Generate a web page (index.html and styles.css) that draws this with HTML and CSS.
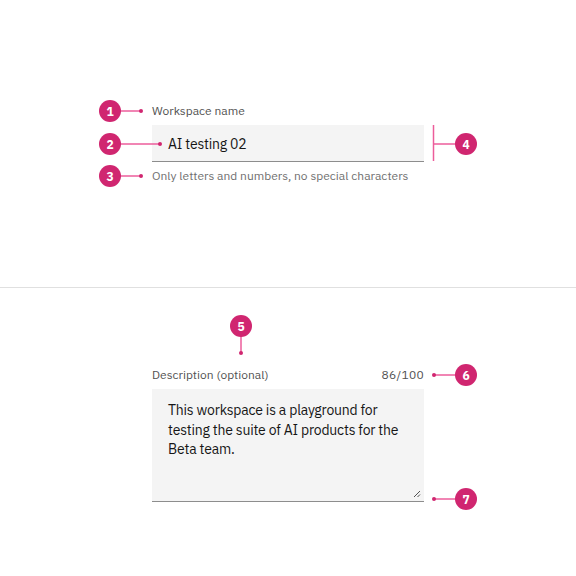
FILE: index.html
```html
<!DOCTYPE html>
<html lang="en">
<head>
<meta charset="utf-8">
<title>Text input anatomy</title>
<link rel="stylesheet" href="styles.css">
</head>
<body>
<main class="page">
  <section class="panel panel-top">
    <div class="field">
      <label class="label">Workspace name</label>
      <div class="input">AI testing 02</div>
      <p class="helper">Only letters and numbers, no special characters</p>

      <svg class="note note-1" width="44" height="22" viewBox="0 0 44 22">
        <line class="wire" x1="21" y1="11" x2="42" y2="11"/>
        <circle class="dot" cx="42" cy="11" r="2"/>
        <circle class="disc" cx="11" cy="11" r="11"/>
        <text class="num" x="11" y="15.5">1</text>
      </svg>
      <svg class="note note-2" width="63" height="22" viewBox="0 0 63 22">
        <line class="wire" x1="21" y1="11" x2="61" y2="11"/>
        <circle class="dot" cx="61" cy="11" r="2"/>
        <circle class="disc" cx="11" cy="11" r="11"/>
        <text class="num" x="11" y="15.5">2</text>
      </svg>
      <svg class="note note-3" width="44" height="22" viewBox="0 0 44 22">
        <line class="wire" x1="21" y1="11" x2="42" y2="11"/>
        <circle class="dot" cx="42" cy="11" r="2"/>
        <circle class="disc" cx="11" cy="11" r="11"/>
        <text class="num" x="11" y="15.5">3</text>
      </svg>
      <svg class="note note-4" width="46" height="38" viewBox="0 0 46 38">
        <line class="wire" x1="1.5" y1="1" x2="1.5" y2="37"/>
        <line class="wire" x1="1.5" y1="20" x2="25" y2="20"/>
        <circle class="disc" cx="34" cy="20" r="11"/>
        <text class="num" x="34" y="24.5">4</text>
      </svg>
    </div>
  </section>

  <section class="panel panel-bottom">
    <div class="field">
      <div class="label-row">
        <span class="label">Description (optional)</span>
        <span class="label counter">86/100</span>
      </div>
      <div class="textarea">
        <p class="textarea-text">This workspace is a playground for testing the suite of AI products for the Beta team.</p>
        <svg class="resize" width="8" height="8" viewBox="0 0 8 8">
          <line x1="1" y1="7" x2="7" y2="1"/>
          <line x1="4.5" y1="7" x2="7" y2="4.5"/>
        </svg>
      </div>

      <svg class="note note-5" width="22" height="41" viewBox="0 0 22 41">
        <line class="wire" x1="11" y1="20" x2="11" y2="38"/>
        <circle class="dot" cx="11" cy="38" r="2"/>
        <circle class="disc" cx="11" cy="11" r="11"/>
        <text class="num" x="11" y="15.5">5</text>
      </svg>
      <svg class="note note-6" width="46" height="22" viewBox="0 0 46 22">
        <line class="wire" x1="2" y1="11" x2="25" y2="11"/>
        <circle class="dot" cx="2" cy="11" r="2"/>
        <circle class="disc" cx="34" cy="11" r="11"/>
        <text class="num" x="34" y="15.5">6</text>
      </svg>
      <svg class="note note-7" width="46" height="22" viewBox="0 0 46 22">
        <line class="wire" x1="2" y1="11" x2="25" y2="11"/>
        <circle class="dot" cx="2" cy="11" r="2"/>
        <circle class="disc" cx="34" cy="11" r="11"/>
        <text class="num" x="34" y="15.5">7</text>
      </svg>
    </div>
  </section>
</main>
</body>
</html>
```

FILE: styles.css
```css
* { box-sizing: border-box; }

html, body {
  margin: 0;
  padding: 0;
  background: #ffffff;
}

body {
  font-family: "IBM Plex Sans", Inter, "Noto Sans", sans-serif;
  color: #161616;
}

.page {
  width: 576px;
  height: 576px;
  overflow: hidden;
}

.panel {
  padding-left: 152px;
}

.panel-top {
  height: 288px;
  padding-top: 103px;
  border-bottom: 1px solid #e0e0e0;
}

.panel-bottom {
  padding-top: 79px;
}

.field {
  position: relative;
  width: 272px;
}

.label {
  display: block;
  font-size: 12px;
  line-height: 16px;
  letter-spacing: 0;
  color: #525252;
  margin: 0 0 6px;
}

.label-row {
  display: flex;
  justify-content: space-between;
}

.counter {
  letter-spacing: 0.3px;
}

.input {
  height: 37px;
  background: #f4f4f4;
  border-bottom: 1px solid #8d8d8d;
  padding: 2px 16px 0;
  display: flex;
  align-items: center;
  font-size: 14px;
  letter-spacing: -0.2px;
  color: #161616;
}

.helper {
  margin: 6px 0 0;
  font-size: 12px;
  line-height: 16px;
  letter-spacing: 0;
  color: #6f6f6f;
}

.textarea {
  position: relative;
  height: 113px;
  background: #f4f4f4;
  border-bottom: 1px solid #8d8d8d;
  padding: 12px 16px 11px;
}

.textarea-text {
  margin: 0;
  font-size: 14px;
  line-height: 19.5px;
  letter-spacing: -0.2px;
  color: #161616;
}

.resize {
  position: absolute;
  right: 3px;
  bottom: 3px;
}

.resize line {
  stroke: #525252;
  stroke-width: 1;
}

.note {
  position: absolute;
  overflow: visible;
}

.wire {
  stroke: #ec5d9b;
  stroke-width: 1.5;
}

.dot, .disc {
  fill: #d02670;
}

.num {
  fill: #ffffff;
  font-family: "IBM Plex Sans", Inter, "Noto Sans", sans-serif;
  font-size: 12px;
  font-weight: 700;
  text-anchor: middle;
}

.note-1 { left: -53px; top: -3px; }
.note-2 { left: -53px; top: 30px; }
.note-3 { left: -53px; top: 62px; }
.note-4 { left: 280px; top: 21px; }
.note-5 { left: 78px; top: -52px; }
.note-6 { left: 280px; top: -3px; }
.note-7 { left: 280px; top: 121px; }
```
